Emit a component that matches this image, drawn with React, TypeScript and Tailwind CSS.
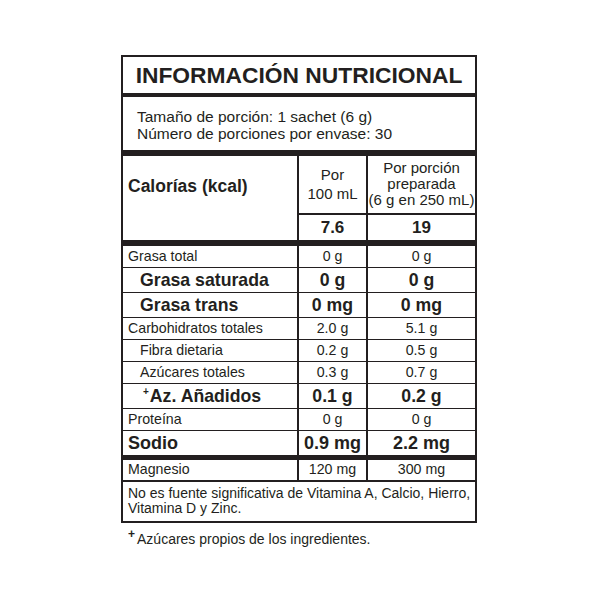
import React from 'react'

type Row = {
  label: string
  per100: string
  perServing: string
  bold?: boolean
  indent?: boolean
  plus?: boolean
}

const rows: Row[] = [
  { label: 'Grasa total', per100: '0 g', perServing: '0 g' },
  { label: 'Grasa saturada', per100: '0 g', perServing: '0 g', bold: true, indent: true },
  { label: 'Grasa trans', per100: '0 mg', perServing: '0 mg', bold: true, indent: true },
  { label: 'Carbohidratos totales', per100: '2.0 g', perServing: '5.1 g' },
  { label: 'Fibra dietaria', per100: '0.2 g', perServing: '0.5 g', indent: true },
  { label: 'Azúcares totales', per100: '0.3 g', perServing: '0.7 g', indent: true },
  { label: 'Az. Añadidos', per100: '0.1 g', perServing: '0.2 g', bold: true, indent: true, plus: true },
  { label: 'Proteína', per100: '0 g', perServing: '0 g' },
]

const NutrientRow: React.FC<{ row: Row }> = ({ row }) => {
  const text = row.bold ? 'text-[17.7px] font-bold' : 'text-[14.2px]'
  return (
    <div className={`flex border-b border-[#231f20] ${row.bold ? 'h-[25px]' : 'h-[22px]'}`}>
      <div
        className={`w-[174px] flex items-center whitespace-nowrap ${text} ${
          row.plus ? 'pl-[20px]' : row.indent ? 'pl-[17px]' : 'pl-[5px]'
        }`}
      >
        {row.plus && <span className="text-[10px] font-bold self-start mt-[3px] mr-[1px] leading-none">+</span>}
        {row.label}
      </div>
      <div className={`w-[69px] border-l-2 border-[#231f20] flex items-center justify-center ${text}`}>
        {row.per100}
      </div>
      <div className={`flex-1 border-l-2 border-[#231f20] flex items-center justify-center ${text}`}>
        {row.perServing}
      </div>
    </div>
  )
}

export default function App() {
  return (
    <div
      className="w-[600px] h-[600px] bg-white text-[#231f20] pt-[55px] pl-[121px]"
      style={{ fontFamily: '"Liberation Sans", Arial, sans-serif' }}
    >
      <div className="w-[356px] border-2 border-[#231f20]">
        {/* Title */}
        <div className="h-[40px] border-b-4 border-[#231f20] flex items-center justify-center pt-[1px]">
          <h1 className="text-[22.8px] font-bold leading-none whitespace-nowrap">INFORMACIÓN NUTRICIONAL</h1>
        </div>

        {/* Serving info */}
        <div className="h-[59px] border-b-[6px] border-[#231f20] pl-[14px] pt-[11px] text-[15.5px] leading-[17px] whitespace-nowrap">
          <p>Tamaño de porción: 1 sachet (6 g)</p>
          <p>Número de porciones por envase: 30</p>
        </div>

        {/* Calories */}
        <div className="flex h-[90px] border-b-[6px] border-[#231f20]">
          <div className="w-[174px]">
            <div className="h-[60px] flex items-center pl-[5px] pt-[1px] text-[17.5px] font-bold whitespace-nowrap">
              Calorías (kcal)
            </div>
          </div>
          <div className="w-[69px] border-l-2 border-[#231f20] flex flex-col">
            <div className="h-[60px] flex flex-col items-center justify-center text-[15px] leading-[19px] text-center">
              <span>Por</span>
              <span>100 mL</span>
            </div>
            <div className="flex-1 border-t-2 border-[#231f20] flex items-center justify-center text-[17px] font-bold">
              7.6
            </div>
          </div>
          <div className="flex-1 border-l-2 border-[#231f20] flex flex-col">
            <div className="h-[60px] flex flex-col items-center justify-center text-[15px] leading-[16.3px] text-center whitespace-nowrap">
              <span>Por porción</span>
              <span>preparada</span>
              <span>(6 g en 250 mL)</span>
            </div>
            <div className="flex-1 border-t-2 border-[#231f20] flex items-center justify-center text-[17px] font-bold">
              19
            </div>
          </div>
        </div>

        {/* Nutrients */}
        {rows.map((row) => (
          <NutrientRow key={row.label} row={row} />
        ))}

        {/* Sodium */}
        <div className="flex h-[29px] border-b-[5px] border-[#231f20] text-[18px] font-bold">
          <div className="w-[174px] flex items-center pl-[5px]">Sodio</div>
          <div className="w-[69px] border-l-2 border-[#231f20] flex items-center justify-center whitespace-nowrap">
            0.9 mg
          </div>
          <div className="flex-1 border-l-2 border-[#231f20] flex items-center justify-center">2.2 mg</div>
        </div>

        {/* Magnesium */}
        <div className="flex h-[22px] border-b-2 border-[#231f20] text-[14.2px]">
          <div className="w-[174px] flex items-center pl-[5px]">Magnesio</div>
          <div className="w-[69px] border-l-2 border-[#231f20] flex items-center justify-center">120 mg</div>
          <div className="flex-1 border-l-2 border-[#231f20] flex items-center justify-center">300 mg</div>
        </div>

        {/* Note */}
        <div className="h-[39px] pl-[5px] pt-[4px] text-[14px] leading-[15px] whitespace-nowrap">
          <p>No es fuente significativa de Vitamina A, Calcio, Hierro,</p>
          <p>Vitamina D y Zinc.</p>
        </div>
      </div>

      <div className="mt-[6px] pl-[7px] flex items-start text-[14px] leading-[16px] whitespace-nowrap">
        <span className="text-[12px] font-bold leading-none mr-[2px] -mt-[1px]">+</span>
        <span className="mt-[2px]">Azúcares propios de los ingredientes.</span>
      </div>
    </div>
  )
}
